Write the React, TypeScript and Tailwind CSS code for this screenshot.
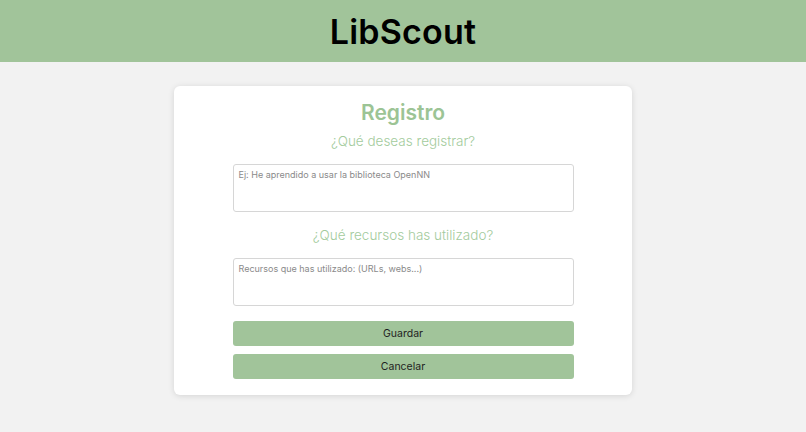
import React from 'react';

export default function App() {
  return (
    <div className="min-h-screen bg-[#f2f2f2] font-['Inter','DejaVu_Sans',sans-serif]">
      <header className="h-[62px] bg-[#a1c49a] flex items-center justify-center">
        <h1 className="text-[34px] font-semibold text-black tracking-[0.2px]">LibScout</h1>
      </header>

      <main className="flex justify-center pt-6">
        <form className="w-[458px] bg-white rounded-md shadow-[0_1px_6px_rgba(0,0,0,0.12)] flex flex-col items-center pt-3 pb-[16px]">
          <h2 className="text-[21px] leading-[30px] font-semibold text-[#9cc495]">Registro</h2>
          <p className="mt-[3px] text-[13.5px] leading-[20px] font-light text-[#a3cb9d]">¿Qué deseas registrar?</p>
          <textarea
            className="mt-[13px] w-[341px] h-[48px] resize-none border border-[#d6d6d6] rounded-[3px] px-[5px] py-[3px] text-[9px] text-[#555] placeholder:text-[#8a8a8a] outline-none"
            placeholder="Ej: He aprendido a usar la biblioteca OpenNN"
          />
          <p className="mt-[13px] text-[13.5px] leading-[20px] font-light text-[#a3cb9d]">¿Qué recursos has utilizado?</p>
          <textarea
            className="mt-[13px] w-[341px] h-[48px] resize-none border border-[#d6d6d6] rounded-[3px] px-[5px] py-[3px] text-[9px] text-[#555] placeholder:text-[#8a8a8a] outline-none"
            placeholder="Recursos que has utilizado: (URLs, webs...)"
          />
          <button type="button" className="mt-[15px] w-[341px] h-[25px] rounded-[3px] bg-[#a1c49a] text-[10.5px] text-[#1f1f1f]">
            Guardar
          </button>
          <button type="button" className="mt-[8px] w-[341px] h-[25px] rounded-[3px] bg-[#a1c49a] text-[10.5px] text-[#1f1f1f]">
            Cancelar
          </button>
        </form>
      </main>
    </div>
  );
}
